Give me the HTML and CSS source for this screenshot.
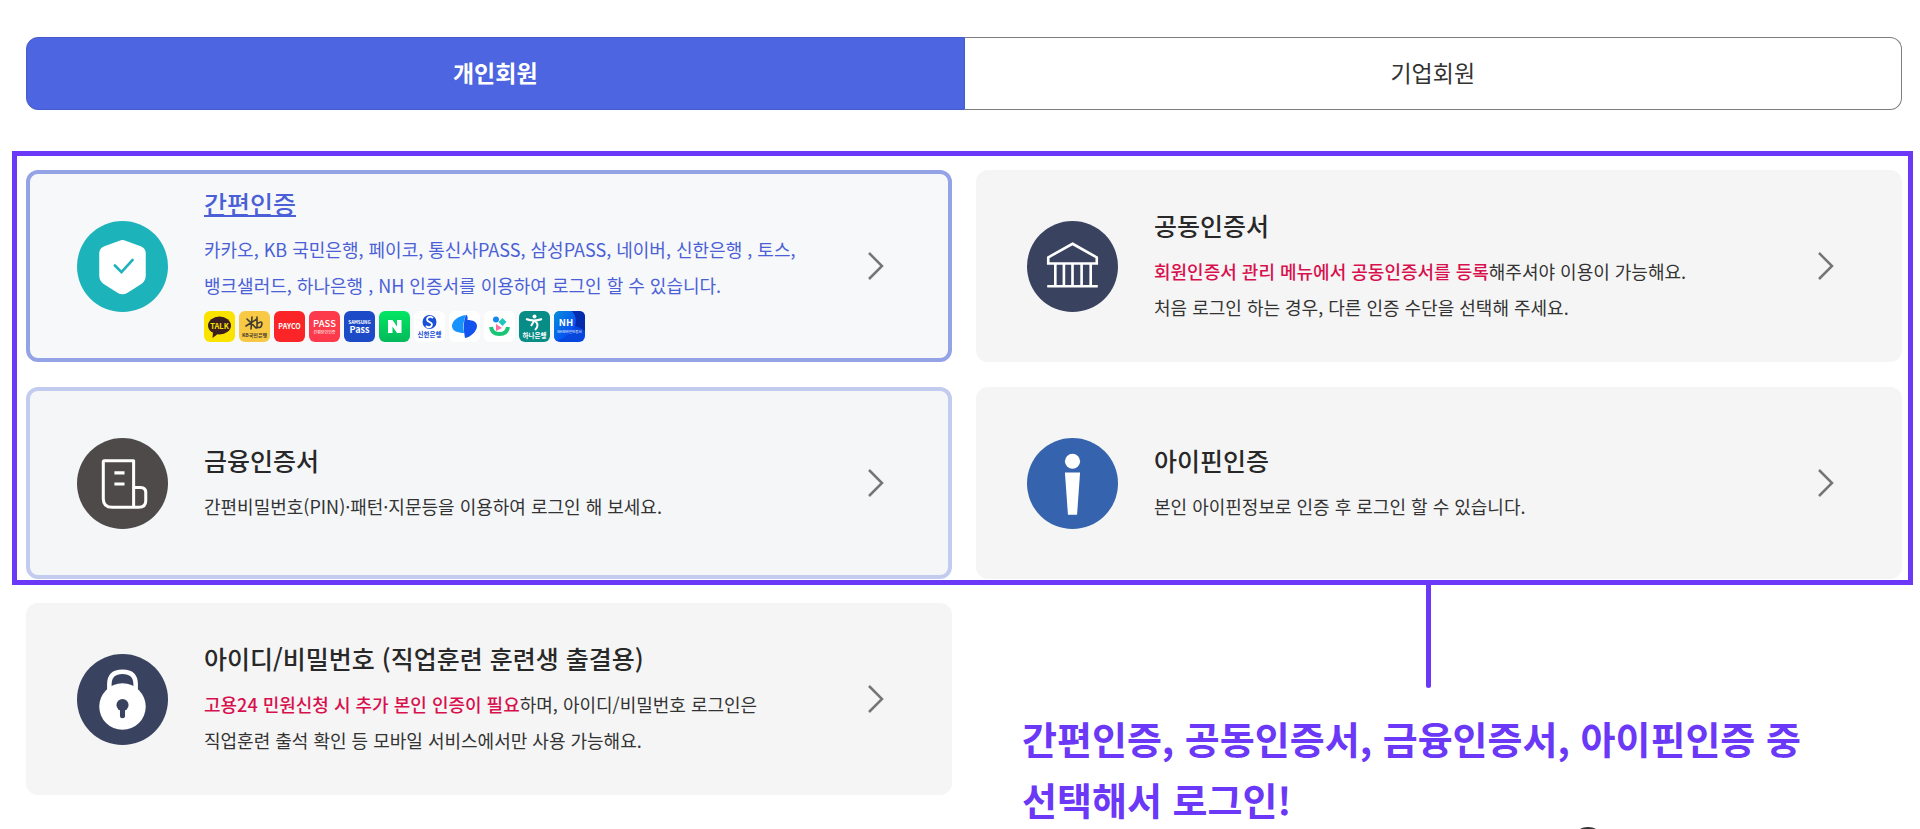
FILE: index.html
```html
<!DOCTYPE html>
<html lang="ko">
<head>
    <meta charset="UTF-8">
    <meta name="viewport" content="width=device-width, initial-scale=1.0">
    <title>로그인</title>
    <link rel="stylesheet" href="styles.css">
</head>
<body>
    <main class="page">
        <div class="tabs">
            <button type="button" class="tab active">개인회원</button>
            <button type="button" class="tab">기업회원</button>
        </div>

        <section class="highlight">
            <div class="card-grid">
                <a href="#" class="card selected">
                    <svg class="card-icon" viewBox="0 0 90 90">
                        <circle cx="45" cy="45" r="45" fill="#1db3ba"/>
                        <path d="M42 19.500Q45 18 48 19.500L63 25Q68 27 68 32V54Q68 59 64 62L50 71Q45 74 40 71L26 62Q22 59 22 54V32Q22 27 27 25Z" fill="#fff"/>
                        <path d="M37.500 44L44 50.500L55 38.500" fill="none" stroke="#1db3ba" stroke-width="2.600" stroke-linecap="round"/>
                    </svg>
                    <div class="card-body">
                        <h2>간편인증</h2>
                        <p>카카오, KB 국민은행, 페이코, 통신사PASS, 삼성PASS, 네이버, 신한은행 , 토스,<br>뱅크샐러드, 하나은행 , NH 인증서를 이용하여 로그인 할 수 있습니다.</p>
                        <div class="providers">
                            <svg viewBox="0 0 31 31">
                                <rect width="31" height="31" rx="6" fill="#fbe300"/>
                                <ellipse cx="15.500" cy="14.500" rx="11.500" ry="9" fill="#3b1e1e"/>
                                <path d="M9 21L8.500 27L15 22Z" fill="#3b1e1e"/>
                                <text x="15.500" y="17.500" class="logo-text" font-size="7.500" font-weight="700" fill="#fbe300">TALK</text>
                            </svg>
                            <svg viewBox="0 0 31 31">
                                <rect width="31" height="31" rx="6" fill="#f8c945"/>
                                <path d="M8 8L17 17M13 6L12 18M18 8L7 15M18 6V17M18 13Q23 9 23 13Q22 18 18 16" fill="none" stroke="#453c30" stroke-width="1.600" stroke-linecap="round"/>
                                <text x="15.500" y="25.500" class="logo-text" font-size="5" font-weight="700" fill="#453c30">KB국민은행</text>
                            </svg>
                            <svg viewBox="0 0 31 31">
                                <rect width="31" height="31" rx="6" fill="#fb2426"/>
                                <text x="15.500" y="18" class="logo-text" font-size="7" font-weight="700" fill="#fff">PAYCO</text>
                            </svg>
                            <svg viewBox="0 0 31 31">
                                <rect width="31" height="31" rx="6" fill="#fd3a4c"/>
                                <text x="15.500" y="16" class="logo-text" font-size="9.500" font-weight="500" fill="#fff">PASS</text>
                                <text x="15.500" y="23" class="logo-text" font-size="4" fill="#fff">간편본인인증</text>
                            </svg>
                            <svg viewBox="0 0 31 31">
                                <rect width="31" height="31" rx="6" fill="#1d4bc8"/>
                                <text x="15.500" y="13" class="logo-text" font-size="4.500" font-weight="700" fill="#fff">SAMSUNG</text>
                                <text x="15.500" y="22" class="logo-text" font-size="9" font-weight="700" fill="#fff">Pass</text>
                            </svg>
                            <svg viewBox="0 0 31 31">
                                <defs>
                                    <linearGradient id="naver" x1="0" y1="0" x2="0" y2="1">
                                        <stop offset="0" stop-color="#03e763"/>
                                        <stop offset="1" stop-color="#04b85a"/>
                                    </linearGradient>
                                </defs>
                                <rect width="31" height="31" rx="6" fill="url(#naver)"/>
                                <path d="M9 9H13.500L18 15.500V9H22.500V22H18L13.500 15.500V22H9Z" fill="#fff"/>
                            </svg>
                            <svg viewBox="0 0 31 31">
                                <rect width="31" height="31" rx="6" fill="#fff"/>
                                <circle cx="15.500" cy="11" r="7" fill="#1a4fd8"/>
                                <path d="M19 7Q16 4.500 13.500 7Q12 9.500 15.500 11Q19 12.500 17.500 15Q15 17.500 12 15" fill="none" stroke="#fff" stroke-width="1.800"/>
                                <text x="15.500" y="26" class="logo-text" font-size="6.500" font-weight="700" fill="#1a4fd8">신한은행</text>
                            </svg>
                            <svg viewBox="0 0 31 31">
                                <rect width="31" height="31" rx="6" fill="#fff"/>
                                <path d="M17 4C9 5 3 10 3 15C3 20 9 22 15 22Q13 12 17 4Z" fill="#1693ff"/>
                                <path d="M17 4Q13 13 16 27C22 26 28 20 28 15C28 11 24 9 18.500 9Q19 4 17 4Z" fill="#1353ee"/>
                            </svg>
                            <svg viewBox="0 0 31 31">
                                <rect width="31" height="31" rx="6" fill="#fff"/>
                                <circle cx="12" cy="8.500" r="3" fill="#1689ee"/>
                                <path d="M18.500 7L22.500 11L18.500 15L14.500 11Z" fill="#20c4bd"/>
                                <path d="M12 13L18 17L12 20Z" fill="#ff6fa0"/>
                                <path d="M7 16Q8 23 15.500 23Q23 23 24 16" fill="none" stroke="#18c676" stroke-width="4"/>
                            </svg>
                            <svg viewBox="0 0 31 31">
                                <rect width="31" height="31" rx="6" fill="#078c86"/>
                                <circle cx="15.500" cy="5.500" r="2" fill="#fff"/>
                                <path d="M7 8Q15 11 23 8M16 10Q21 14 16 19M15 10L12 15" fill="none" stroke="#fff" stroke-width="2"/>
                                <text x="15.500" y="27" class="logo-text" font-size="6.500" font-weight="700" fill="#fff">하나은행</text>
                            </svg>
                            <svg viewBox="0 0 31 31">
                                <defs>
                                    <linearGradient id="nh" x1="0" y1="0" x2="1" y2="1">
                                        <stop offset="0" stop-color="#078ed8"/>
                                        <stop offset="1" stop-color="#0538ff"/>
                                    </linearGradient>
                                </defs>
                                <rect width="31" height="31" rx="6" fill="#0646dc"/>
                                <path d="M6 0H18Q24 7 21 15Q16 25 3 30Q0 28 0 25V6Q0 0 6 0Z" fill="url(#nh)"/>
                                <path d="M18 0H25Q31 0 31 6V20Q26 16 21 15Q24 7 18 0Z" fill="#062cae"/>
                                <text x="12" y="15" class="logo-text" font-size="9.500" font-weight="700" fill="#fff">NH</text>
                                <text x="15.500" y="22" class="logo-text" font-size="3.500" fill="#fff">NH모바일인증서</text>
                            </svg>
                        </div>
                    </div>
                    <svg class="chevron" viewBox="0 0 16 28"><path d="M1 1L14 14L1 27"/></svg>
                </a>

                <a href="#" class="card">
                    <svg class="card-icon" viewBox="0 0 90 90">
                        <circle cx="45" cy="45" r="45" fill="#39425f"/>
                        <path d="M45 22.500L69 36V42H21V36ZM20 64.500H70M28 42V64M36.500 42V64M45 42V64M54 42V64M63 42V64" fill="none" stroke="#fff" stroke-width="2.600"/>
                    </svg>
                    <div class="card-body">
                        <h2>공동인증서</h2>
                        <p><strong>회원인증서 관리 메뉴에서 공동인증서를 등록</strong>해주셔야 이용이 가능해요.<br>처음 로그인 하는 경우, 다른 인증 수단을 선택해 주세요.</p>
                    </div>
                    <svg class="chevron" viewBox="0 0 16 28"><path d="M1 1L14 14L1 27"/></svg>
                </a>

                <a href="#" class="card recent">
                    <svg class="card-icon" viewBox="0 0 90 90">
                        <circle cx="45" cy="45" r="45" fill="#4e4a49"/>
                        <path d="M27 22.500H56V66.500Q56 68.500 58 68.500H35Q26 68.500 26 60V23.500Q26 22.500 27 22.500ZM57 49H63Q68 49 68 54V62Q68 68.500 61 68.500H57" fill="none" stroke="#fff" stroke-width="3" stroke-linejoin="round"/>
                        <path d="M37 34.500H47M37 45.500H47" stroke="#fff" stroke-width="3"/>
                    </svg>
                    <div class="card-body">
                        <h2>금융인증서</h2>
                        <p>간편비밀번호(PIN)·패턴·지문등을 이용하여 로그인 해 보세요.</p>
                    </div>
                    <svg class="chevron" viewBox="0 0 16 28"><path d="M1 1L14 14L1 27"/></svg>
                </a>

                <a href="#" class="card">
                    <svg class="card-icon" viewBox="0 0 90 90">
                        <circle cx="45" cy="45" r="45" fill="#3563ad"/>
                        <circle cx="45" cy="23" r="7.500" fill="#fff"/>
                        <path d="M37.500 34H52.500L49.500 76H40.500Z" fill="#fff"/>
                    </svg>
                    <div class="card-body">
                        <h2>아이핀인증</h2>
                        <p>본인 아이핀정보로 인증 후 로그인 할 수 있습니다.</p>
                    </div>
                    <svg class="chevron" viewBox="0 0 16 28"><path d="M1 1L14 14L1 27"/></svg>
                </a>
            </div>
            <span class="connector"></span>
        </section>

        <div class="card-grid last-row">
            <a href="#" class="card">
                <svg class="card-icon" viewBox="0 0 90 90">
                    <circle cx="45" cy="45" r="45" fill="#39425f"/>
                    <path d="M32 38V30Q32 17.500 45 17.500Q58 17.500 58 30V38" fill="none" stroke="#fff" stroke-width="4.500"/>
                    <circle cx="45" cy="52" r="23" fill="#fff"/>
                    <circle cx="45" cy="50.500" r="6" fill="#39425f"/>
                    <path d="M45 51V61" stroke="#39425f" stroke-width="5" stroke-linecap="round"/>
                </svg>
                <div class="card-body">
                    <h2>아이디/비밀번호 (직업훈련 훈련생 출결용)</h2>
                    <p><strong>고용24 민원신청 시 추가 본인 인증이 필요</strong>하며, 아이디/비밀번호 로그인은<br>직업훈련 출석 확인 등 모바일 서비스에서만 사용 가능해요.</p>
                </div>
                <svg class="chevron" viewBox="0 0 16 28"><path d="M1 1L14 14L1 27"/></svg>
            </a>
            <div class="note">
                <p>간편인증, 공동인증서, 금융인증서, 아이핀인증 중<br>선택해서 로그인!</p>
                <svg class="note-mark" viewBox="0 0 20 2"><ellipse cx="10" cy="9" rx="13" ry="9" fill="#333"/></svg>
            </div>
        </div>
    </main>
</body>
</html>
```
FILE: styles.css
```css
* {
    box-sizing: border-box;
}
body {
    margin: 0;
    background: #fff;
    color: #222;
    font-family: "Noto Sans CJK KR", sans-serif;
}
h2, p {
    margin: 0;
}
.page {
    padding: 37px 7px 0 12px;
}

/* tabs */
.tabs {
    display: flex;
    height: 73px;
    margin: 0 11px 41px 14px;
}
.tab {
    flex: 1;
    padding: 0 0 4px;
    border: 1px solid #7d7d82;
    border-left: 0;
    border-radius: 0 12px 12px 0;
    background: #fff;
    color: #333;
    font-family: inherit;
    font-size: 23px;
    cursor: pointer;
}
.tab.active {
    border: 1px solid #465bcb;
    border-radius: 12px 0 0 12px;
    background: #4d65e0;
    color: #fff;
    font-weight: 700;
}

/* login methods */
.highlight {
    position: relative;
    padding: 14px 6px 1px 9px;
    border: 5px solid #6a38f6;
}
.card-grid {
    display: grid;
    grid-template-columns: 1fr 1fr;
    gap: 25px 24px;
    align-items: start;
}
.last-row {
    margin: 18px 11px 0 14px;
}
.card {
    display: flex;
    align-items: center;
    gap: 36px;
    min-height: 192px;
    padding: 0 68px 0 51px;
    border-radius: 12px;
    background: #f5f5f5;
    color: #333;
    text-decoration: none;
}
.card.selected,
.card.recent {
    padding: 0 64px 0 47px;
    border: 4px solid #94a2e6;
    background: #f6f8fa;
}
.card.recent {
    border-color: #c3cbee;
    background: #f4f6f8;
}
.card-icon {
    flex: none;
    width: 91px;
    height: 91px;
}
.card-body {
    flex: 1;
}
.card h2 {
    color: #282828;
    font-size: 25px;
    font-weight: 500;
    line-height: 36px;
}
.card p {
    margin-top: 10px;
    font-size: 18px;
    line-height: 36px;
    white-space: nowrap;
}
.card strong {
    color: #d8104e;
    font-weight: 500;
}
.card.selected h2,
.card.selected p {
    color: #4b60d6;
}
.card.selected h2 {
    text-decoration: underline;
    text-decoration-thickness: 2px;
}
.chevron {
    flex: none;
    width: 16px;
    height: 28px;
    fill: none;
    stroke: #757575;
    stroke-width: 2.5;
}
.providers {
    display: flex;
    gap: 4px;
    margin: 8px 0 6px;
}
.providers svg {
    width: 31px;
    height: 31px;
}
.logo-text {
    text-anchor: middle;
}

/* annotation */
.connector {
    position: absolute;
    top: 100%;
    left: 74.5%;
    width: 5px;
    height: 108px;
    border-radius: 0 0 3px 3px;
    background: #6a38f6;
}
.note {
    position: relative;
    padding: 104px 0 0 46px;
    color: #6a38f6;
    font-size: 38px;
    font-weight: 700;
    line-height: 61px;
}
.note-mark {
    position: absolute;
    bottom: 0;
    left: 65%;
    width: 20px;
    height: 2px;
}
```
